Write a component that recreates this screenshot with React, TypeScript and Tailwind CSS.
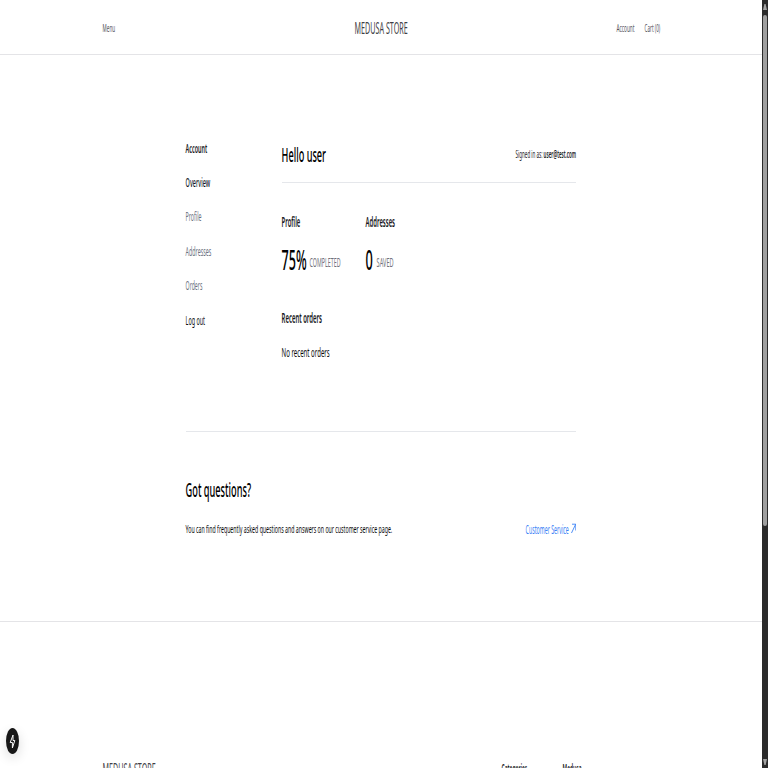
import { useLayoutEffect, useRef, useState } from "react";

type LabelProps = { text: string; width: number; className?: string };

// A single line of condensed text, fitted to the given width.
function Label({ text, width, className = "" }: LabelProps) {
  const ref = useRef<HTMLSpanElement>(null);
  const [ratio, setRatio] = useState(0.5);
  useLayoutEffect(() => {
    if (ref.current) setRatio(width / ref.current.offsetWidth);
  }, [width, text]);
  return (
    <span className={`block shrink-0 ${className}`} style={{ width }}>
      <span
        ref={ref}
        className="inline-block origin-left whitespace-nowrap align-top"
        style={{ transform: `translateX(-0.4px) scaleX(${ratio})` }}
      >
        {text}
      </span>
    </span>
  );
}

const links = [
  { text: "Overview", width: 24.5, className: "font-medium text-[#111827]" },
  { text: "Profile", width: 16, className: "text-[#6b7280]" },
  { text: "Addresses", width: 25.5, className: "text-[#6b7280]" },
  { text: "Orders", width: 17, className: "text-[#6b7280]" },
  { text: "Log out", width: 19.5, className: "text-[#09090b]" },
];

function Header() {
  return (
    <header className="flex h-[55px] shrink-0 items-center border-b border-[#e4e4e7] pl-[103px] pr-[102px] pt-[2px] text-[10.4px] leading-4 text-[#52525b]">
      <div className="flex-1">
        <Label text="Menu" width={12.5} />
      </div>
      <Label text="MEDUSA STORE" width={53} className="mt-[2px] text-[15.4px] leading-5 text-[#3f3f46]" />
      <div className="flex flex-1 justify-end gap-[9.5px]">
        <Label text="Account" width={18} />
        <Label text="Cart (0)" width={15.5} />
      </div>
    </header>
  );
}

function Sidebar() {
  return (
    <nav className="flex w-24 shrink-0 flex-col gap-[14.4px] pt-[0.6px] text-[11.9px] leading-5">
      <Label text="Account" width={21.5} className="font-semibold text-[#18181b]" />
      {links.map((l) => (
        <Label key={l.text} {...l} />
      ))}
    </nav>
  );
}

function Stat(p: { title: LabelProps; value: LabelProps; unit: LabelProps }) {
  return (
    <div className="flex flex-col gap-[12px]">
      <Label {...p.title} className="text-[13.4px] font-semibold leading-5" />
      <div className="flex items-center gap-[3px]">
        <Label {...p.value} className="text-[27.2px] font-medium leading-8 text-black" />
        <Label {...p.unit} className="pt-[5px] text-[12.2px] leading-5 text-[#71717a]" />
      </div>
    </div>
  );
}

function Overview() {
  return (
    <section className="flex flex-1 flex-col">
      <div className="flex h-[46px] items-start justify-between border-b border-[#e5e7eb]">
        <Label text="Hello user" width={44.5} className="pt-px text-[20.4px] font-medium leading-8 text-black" />
        <div className="flex gap-[1px] pt-[6.5px] text-[10.4px] leading-5">
          <Label text="Signed in as:" width={27} />
          <Label text="user@test.com" width={32.5} className="font-semibold" />
        </div>
      </div>
      <div className="flex gap-[25px] pt-[29px]">
        <Stat
          title={{ text: "Profile", width: 18.5 }}
          value={{ text: "75%", width: 25 }}
          unit={{ text: "COMPLETED", width: 31 }}
        />
        <Stat
          title={{ text: "Addresses", width: 29.5 }}
          value={{ text: "0", width: 7.5 }}
          unit={{ text: "SAVED", width: 17 }}
        />
      </div>
      <Label text="Recent orders" width={40.5} className="mt-[31.5px] text-[13.4px] font-semibold leading-5" />
      <Label text="No recent orders" width={48} className="mt-[14.5px] text-[13.4px] leading-5 text-[#09090b]" />
    </section>
  );
}

function Support() {
  return (
    <section className="mt-auto flex h-[190px] flex-col border-t border-[#e5e7eb] pt-[41px]">
      <Label text="Got questions?" width={65.5} className="text-[20.4px] font-medium leading-8 text-black" />
      <div className="mt-[13.5px] flex items-center justify-between">
        <Label text="You can find frequently asked questions and answers on our customer service page." width={206.5} className="text-[11.2px] leading-5 text-[#09090b]" />
        <div className="flex items-center gap-[1.4px] text-[#3b82f6]">
          <Label text="Customer Service" width={43.3} className="text-[11.8px] leading-5" />
          <svg className="h-[11px] w-[5.5px]" viewBox="0 0 5.5 11" fill="none" stroke="currentColor" strokeWidth="0.9">
            <path d="M0.5 10 4.7 1.2M1 1.2H4.8V7.5" />
          </svg>
        </div>
      </div>
    </section>
  );
}

function Scrollbar() {
  return (
    <div className="flex w-[6px] shrink-0 flex-col items-center bg-[#2b2b2b] pb-[3px] pl-px pr-[0.5px] pt-[4px]">
      <svg className="h-[6px] w-[4px]" viewBox="0 0 4 6" fill="#a3a3a3">
        <path d="M1.4 0H2.6L4 6H0Z" />
      </svg>
      <div className="mt-[5px] h-[511px] w-[4px] rounded-full bg-[#9f9f9f]" />
      <svg className="mt-auto h-[6px] w-[4px]" viewBox="0 0 4 6" fill="#a3a3a3">
        <path d="M0 0H4L2.6 6H1.4Z" />
      </svg>
    </div>
  );
}

export default function App() {
  return (
    <div className="relative flex h-[768px] w-[768px] overflow-hidden bg-white font-['Noto_Sans','Open_Sans',sans-serif] text-[#18181b]">
      <div className="flex min-w-0 flex-1 flex-col overflow-hidden">
        <Header />
        <main className="flex h-[567px] shrink-0 flex-col border-b border-[#e4e4e7] pl-[186px] pr-[186px] pt-[82px]">
          <div className="flex">
            <Sidebar />
            <Overview />
          </div>
          <Support />
        </main>
        <footer className="flex shrink-0 pl-[103px] pt-[136px]">
          <Label text="MEDUSA STORE" width={53} className="pt-[2px] text-[15.4px] leading-5 text-[#3f3f46]" />
          <div className="flex gap-[35.5px] pl-[345.5px] text-[11.9px] font-semibold leading-5">
            <Label text="Categories" width={25.5} />
            <Label text="Medusa" width={19} />
          </div>
        </footer>
      </div>
      <Scrollbar />
      <div className="absolute left-[6px] top-[728px] flex h-[26px] w-[13px] items-center justify-center rounded-[50%] bg-[#171717] shadow-[0_4px_12px_rgba(0,0,0,0.14)]">
        <svg className="h-[15px] w-[7px]" viewBox="0 0 7 15" fill="none" stroke="#f5f5f5" strokeWidth="1" strokeLinejoin="round">
          <path d="M4 1 1.2 8.5H3.4V14L5.8 6.5H4Z" />
        </svg>
      </div>
    </div>
  );
}
